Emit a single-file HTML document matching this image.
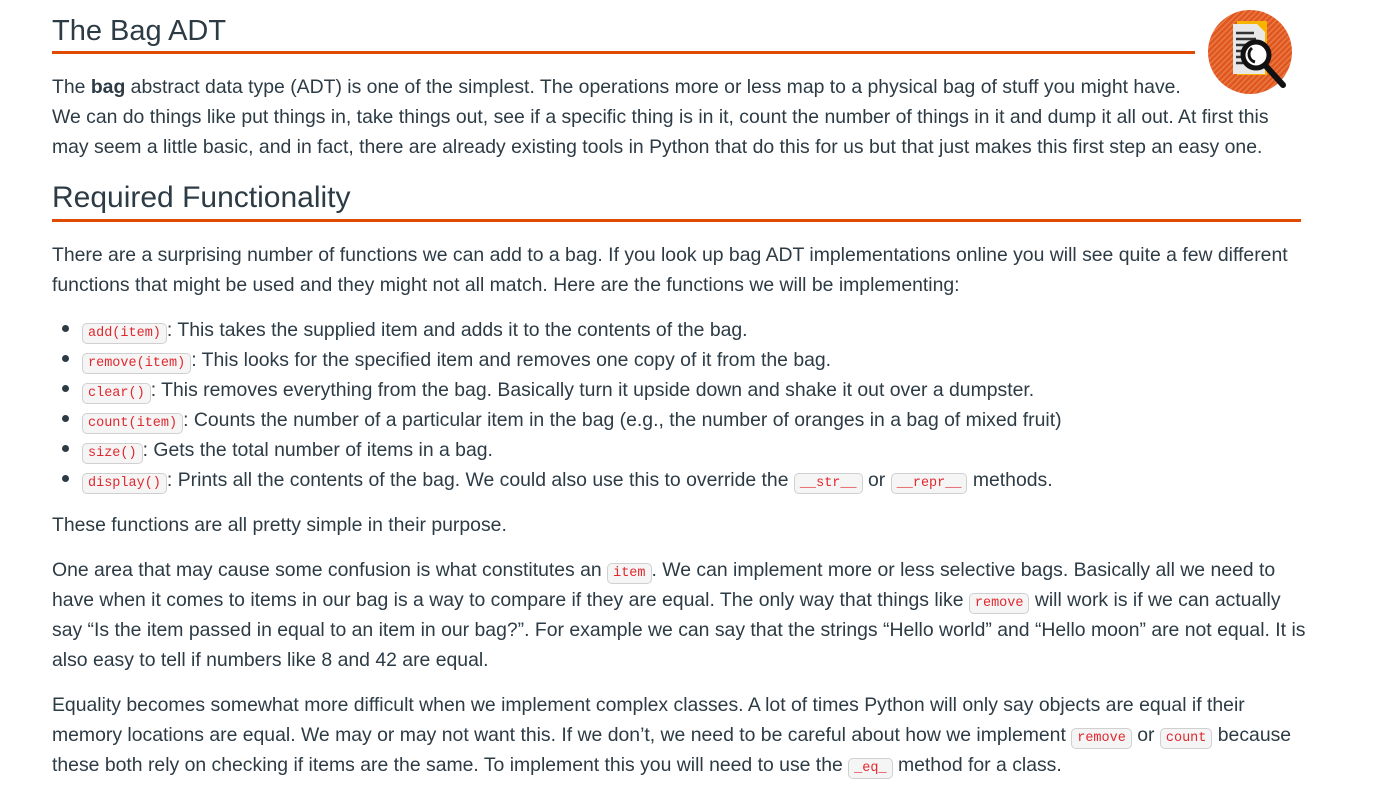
<!DOCTYPE html>
<html><head><style>
body{margin:0;background:#fff;font-family:"Liberation Sans",sans-serif;color:#2d3b45;}
.wrap{position:absolute;left:52px;top:0;width:1250px;}
h1,h2{font-weight:normal;font-size:30px;margin:0;position:absolute;left:0;line-height:36px;}
.rule{position:absolute;left:0;height:3px;background:#e04a00;}
.t{position:absolute;left:0;font-size:19.4px;line-height:30px;white-space:nowrap;}
code{font-family:"Liberation Mono",monospace;font-size:13.5px;color:#e0282e;background:#f5f5f5;border:1px solid #d0d0d0;border-radius:5px;padding:2px 5px;}
.b{position:absolute;left:10px;width:7px;height:7px;border-radius:50%;background:#2d3b45;}
</style></head><body>
<div class="wrap">
<h1 style="top:13px;font-size:29px">The Bag ADT</h1>
<div class="rule" style="top:51px;width:1143px"></div>
<div class="t" style="top:72px">The <b>bag</b> abstract data type (ADT) is one of the simplest. The operations more or less map to a physical bag of stuff you might have.</div>
<div class="t" style="top:102px">We can do things like put things in, take things out, see if a specific thing is in it, count the number of things in it and dump it all out. At first this</div>
<div class="t" style="top:132px">may seem a little basic, and in fact, there are already existing tools in Python that do this for us but that just makes this first step an easy one.</div>
<h2 style="top:180px">Required Functionality</h2>
<div class="rule" style="top:219px;width:1249px"></div>
<div class="t" style="top:240px">There are a surprising number of functions we can add to a bag. If you look up bag ADT implementations online you will see quite a few different</div>
<div class="t" style="top:270px">functions that might be used and they might not all match. Here are the functions we will be implementing:</div>
<div class="b" style="top:325px"></div><div class="t" style="top:315px;left:30px"><code>add(item)</code>: This takes the supplied item and adds it to the contents of the bag.</div>
<div class="b" style="top:355px"></div><div class="t" style="top:345px;left:30px"><code>remove(item)</code>: This looks for the specified item and removes one copy of it from the bag.</div>
<div class="b" style="top:385px"></div><div class="t" style="top:375px;left:30px"><code>clear()</code>: This removes everything from the bag. Basically turn it upside down and shake it out over a dumpster.</div>
<div class="b" style="top:415px"></div><div class="t" style="top:405px;left:30px"><code>count(item)</code>: Counts the number of a particular item in the bag (e.g., the number of oranges in a bag of mixed fruit)</div>
<div class="b" style="top:445px"></div><div class="t" style="top:435px;left:30px"><code>size()</code>: Gets the total number of items in a bag.</div>
<div class="b" style="top:475px"></div><div class="t" style="top:465px;left:30px"><code>display()</code>: Prints all the contents of the bag. We could also use this to override the <code>__str__</code> or <code>__repr__</code> methods.</div>
<div class="t" style="top:510px">These functions are all pretty simple in their purpose.</div>
<div class="t" style="top:555px">One area that may cause some confusion is what constitutes an <code>item</code>. We can implement more or less selective bags. Basically all we need to</div>
<div class="t" style="top:585px">have when it comes to items in our bag is a way to compare if they are equal. The only way that things like <code>remove</code> will work is if we can actually</div>
<div class="t" style="top:615px">say “Is the item passed in equal to an item in our bag?”. For example we can say that the strings “Hello world” and “Hello moon” are not equal. It is</div>
<div class="t" style="top:645px">also easy to tell if numbers like 8 and 42 are equal.</div>
<div class="t" style="top:690px">Equality becomes somewhat more difficult when we implement complex classes. A lot of times Python will only say objects are equal if their</div>
<div class="t" style="top:720px">memory locations are equal. We may or may not want this. If we don’t, we need to be careful about how we implement <code>remove</code> or <code>count</code> because</div>
<div class="t" style="top:750px">these both rely on checking if items are the same. To implement this you will need to use the <code>_eq_</code> method for a class.</div>
</div>
<svg style="position:absolute;left:1207px;top:9px" width="88" height="86" viewBox="0 0 88 86">
<defs><pattern id="p" width="4" height="4" patternUnits="userSpaceOnUse" patternTransform="rotate(45)"><rect width="4" height="4" fill="#e0561f"/><rect width="1.5" height="4" fill="#ea7a45"/></pattern></defs>
<circle cx="43" cy="43" r="42" fill="url(#p)"/>
<rect x="30" y="12" width="30" height="54" fill="#f7b500"/>
<path d="M26 15h24l8 8v42H26z" fill="#e8e8e8"/>
<path d="M29 24h18M29 30h20M29 36h16M29 42h13M29 48h12M29 54h12" stroke="#333" stroke-width="2.5"/>
<circle cx="49" cy="46" r="13" fill="#fff" stroke="#111" stroke-width="5"/>
<path d="M45 39a8 8 0 0 0 3 14" stroke="#111" stroke-width="3" fill="none"/>
<path d="M58 56l18 20" stroke="#111" stroke-width="6" stroke-linecap="round"/>
</svg>
</body></html>
